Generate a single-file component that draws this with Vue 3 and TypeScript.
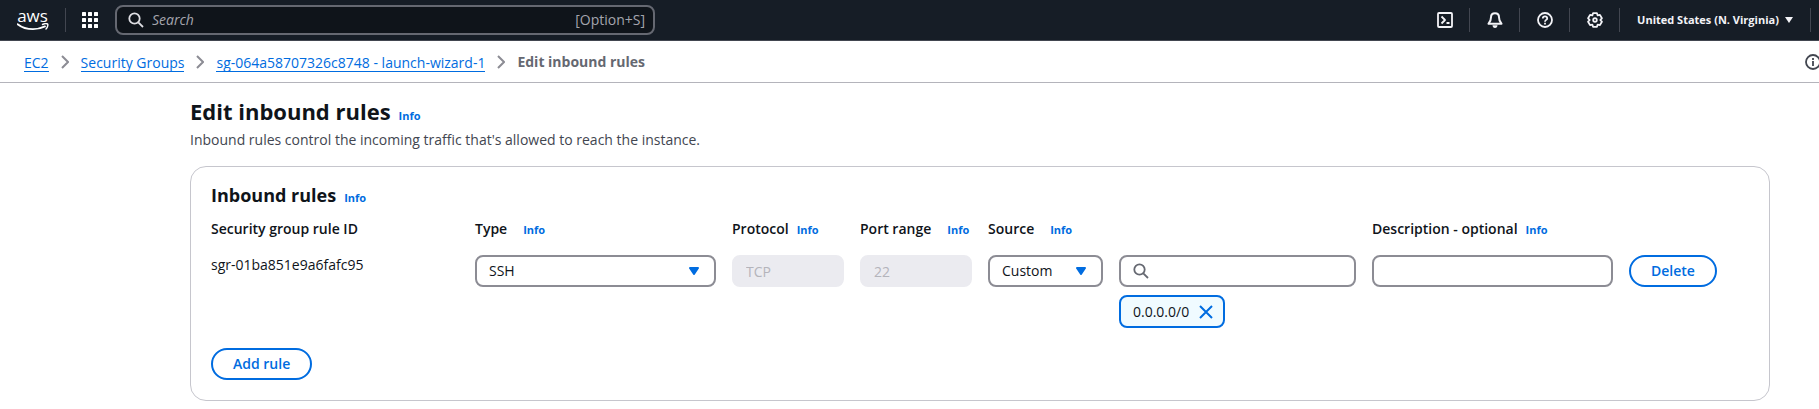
<script setup lang="ts">
import { ref } from 'vue'

const crumbs = ['EC2', 'Security Groups', 'sg-064a58707326c8748 - launch-wizard-1']
const ruleType = ref('SSH')
const source = ref('Custom')
const sourceFilter = ref('')
const description = ref('')
const cidrs = ref(['0.0.0.0/0'])
</script>

<template>
  <div class="page">
    <header class="topbar">
      <a class="logo" href="#" aria-label="AWS home">
        <span class="logo-word">aws</span>
        <svg class="smile" viewBox="0 0 32 8" width="32" height="8" aria-hidden="true">
          <path d="M0.6 1.2C5 4.6 10.500 6.200 16 6.200c4 0 8.300-1 12-2.800" fill="none" stroke="#fff" stroke-width="1.800" stroke-linecap="round" />
          <path d="M25.500 1.500c2-.9 4.500-1 5.200-.4.5.7-.2 3.500-1.700 5" fill="none" stroke="#fff" stroke-width="1.400" stroke-linecap="round" stroke-linejoin="round" />
        </svg>
      </a>
      <button class="apps" type="button" aria-label="Services">
        <svg viewBox="0 0 16 16" width="16" height="16" fill="#fff">
          <template v-for="r in 3" :key="r">
            <rect v-for="c in 3" :key="c" :x="(c - 1) * 6" :y="(r - 1) * 6" width="4" height="4" rx="0.5" />
          </template>
        </svg>
      </button>
      <div class="search">
        <svg viewBox="0 0 16 16" width="16" height="16" fill="none" stroke="#dedee3" stroke-width="1.8">
          <circle cx="6.500" cy="6.500" r="5.200" /><path d="M10.300 10.300 15 15" />
        </svg>
        <input type="text" placeholder="Search" aria-label="Search" />
        <span class="hint">[Option+S]</span>
      </div>
      <nav class="tools">
        <button class="tool" type="button" aria-label="CloudShell">
          <svg viewBox="0 0 16 16" width="16" height="16" fill="none" stroke="#f3f3f7" stroke-width="1.8" stroke-linejoin="round">
            <rect x="1" y="1" width="14" height="14" rx="1" /><path d="M4.500 4.500 8 8l-3.500 3.500M9.500 11h3" />
          </svg>
        </button>
        <button class="tool" type="button" aria-label="Notifications">
          <svg viewBox="0 0 16 16" width="16" height="16" fill="none" stroke="#f3f3f7" stroke-width="2" stroke-linejoin="round">
            <path d="M8 1.200C5.500 1.200 4 3 4 5.300c0 3-.6 4.500-2.500 6.500h13C12.600 9.800 12 8.300 12 5.300 12 3 10.500 1.200 8 1.200Z" /><path d="M5.500 13.200h5C10.500 14.800 9.500 16 8 16s-2.500-1.200-2.500-2.800Z" fill="#f3f3f7" stroke="none" />
          </svg>
        </button>
        <button class="tool" type="button" aria-label="Support">
          <svg viewBox="0 0 16 16" width="16" height="16" fill="none" stroke="#f3f3f7" stroke-width="1.800">
            <circle cx="8" cy="8" r="7" /><path d="M5.800 6.600C5.800 5.200 6.700 4.400 8 4.400s2.200.8 2.200 2C10.200 7.900 8 7.900 8 9.700M8 10.700v1.800" />
          </svg>
        </button>
        <button class="tool" type="button" aria-label="Settings">
          <svg viewBox="0 0 16 16" width="16" height="16" fill="none" stroke="#f3f3f7" stroke-width="1.800" stroke-linejoin="round">
            <path d="M6.040 1.170H9.960L10.650 3.410 12.930 2.890 14.890 6.280 13.300 8 14.890 9.720 12.930 13.110 10.650 12.590 9.960 14.830H6.040L5.350 12.590 3.070 13.110 1.110 9.720 2.700 8 1.110 6.280 3.070 2.890 5.350 3.410Z" /><circle cx="8" cy="8" r="1.800" />
          </svg>
        </button>
        <button class="region" type="button">
          United States (N. Virginia)
          <svg viewBox="0 0 8 6" width="8" height="6" fill="#f3f3f7"><path d="M0 0h8L4 6Z" /></svg>
        </button>
      </nav>
    </header>

    <div class="crumbbar">
      <nav class="crumbs" aria-label="Breadcrumbs">
        <template v-for="crumb in crumbs" :key="crumb">
          <a href="#">{{ crumb }}</a>
          <svg viewBox="0 0 8 14" width="8" height="14" fill="none" stroke="#8c8c94" stroke-width="2"><path d="M1 1l6 6-6 6" /></svg>
        </template>
        <span class="current">Edit inbound rules</span>
      </nav>
      <button class="panel-toggle" type="button" aria-label="Open info panel">
        <svg viewBox="0 0 16 16" width="16" height="16" fill="none" stroke="#424650" stroke-width="1.800">
          <circle cx="8" cy="8" r="7" /><path d="M8 7v5M8 4v2" />
        </svg>
      </button>
    </div>

    <main>
      <div class="title">
        <h1>Edit inbound rules</h1>
        <a class="info" href="#">Info</a>
      </div>
      <p class="lead">Inbound rules control the incoming traffic that's allowed to reach the instance.</p>

      <section class="card">
        <div class="title">
          <h2>Inbound rules</h2>
          <a class="info" href="#">Info</a>
        </div>
        <div class="rules">
          <div class="head">Security group rule ID</div>
          <div class="head wide"><label for="type">Type</label><a class="info" href="#">Info</a></div>
          <div class="head"><label for="protocol">Protocol</label><a class="info" href="#">Info</a></div>
          <div class="head wide"><label for="port">Port range</label><a class="info" href="#">Info</a></div>
          <div class="head wide"><label for="source">Source</label><a class="info" href="#">Info</a></div>
          <div class="head"><label for="description">Description - optional</label><a class="info" href="#">Info</a></div>
          <div class="head"></div>

          <div class="rule-id">sgr-01ba851e9a6fafc95</div>
          <div class="select">
            <select id="type" v-model="ruleType"><option>SSH</option></select>
            <svg viewBox="0 0 10 8" width="10" height="8"><path d="M1 1h8L5 7Z" /></svg>
          </div>
          <input id="protocol" class="field" type="text" value="TCP" disabled />
          <input id="port" class="field" type="text" value="22" disabled />
          <div class="source">
            <div class="select">
              <select id="source" v-model="source"><option>Custom</option></select>
              <svg viewBox="0 0 10 8" width="10" height="8"><path d="M1 1h8L5 7Z" /></svg>
            </div>
            <div class="source-values">
              <div class="filter field">
                <svg viewBox="0 0 16 16" width="16" height="16" fill="none" stroke="#656871" stroke-width="1.800">
                  <circle cx="6.500" cy="6.500" r="5.200" /><path d="M10.300 10.300 15 15" />
                </svg>
                <input v-model="sourceFilter" type="text" aria-label="Source filter" />
              </div>
              <div v-for="cidr in cidrs" :key="cidr" class="token">
                <span>{{ cidr }}</span>
                <button type="button" :aria-label="`Remove ${cidr}`">
                  <svg viewBox="0 0 14 14" width="14" height="14" fill="none" stroke="#006ce0" stroke-width="2"><path d="M1 1l12 12M13 1 1 13" /></svg>
                </button>
              </div>
            </div>
          </div>
          <input id="description" v-model="description" class="field" type="text" />
          <div><button class="pill" type="button">Delete</button></div>
        </div>
        <button class="pill" type="button">Add rule</button>
      </section>
    </main>
  </div>
</template>

<style>
body {
  margin: 0;
  background: #fff;
}
</style>

<style scoped>
.page,
.page * {
  box-sizing: border-box;
}
.page {
  font-family: "Open Sans", "Noto Sans", sans-serif;
  font-size: 14px;
  line-height: 20px;
  color: #0f141a;
}
button,
input,
select {
  font: inherit;
  color: inherit;
  margin: 0;
}
button {
  cursor: pointer;
}
svg {
  display: block;
  flex: none;
}
.topbar {
  display: flex;
  align-items: center;
  height: 41px;
  background: #161d26;
  border-bottom: 1px solid #424650;
  color: #f3f3f7;
}
.logo {
  display: flex;
  flex-direction: column;
  align-items: center;
  width: 66px;
  height: 24px;
  border-right: 1px solid #424650;
  color: #fff;
  text-decoration: none;
}
.logo-word {
  font-size: 17px;
  line-height: 15px;
  font-weight: 500;
}
.apps {
  display: flex;
  padding: 0 17px 0 16px;
  background: none;
  border: 0;
}
.search {
  display: flex;
  align-items: center;
  gap: 8px;
  width: 540px;
  height: 30px;
  padding: 0 8px 0 11px;
  background: #0f141a;
  border: 2px solid #656871;
  border-radius: 8px;
}
.search input {
  flex: 1;
  min-width: 0;
  padding: 0;
  background: none;
  border: 0;
  outline: 0;
}
.search input::placeholder {
  color: #a4a4ad;
  font-style: italic;
  opacity: 1;
}
.hint {
  color: #a4a4ad;
}
.tools {
  display: flex;
  align-items: center;
  margin-left: auto;
  padding-right: 8px;
}
.tool,
.region {
  display: flex;
  align-items: center;
  justify-content: center;
  height: 24px;
  padding: 0;
  background: none;
  border: 0;
  border-right: 1px solid #424650;
}
.tool {
  width: 50px;
}
.region {
  gap: 6px;
  width: 191px;
  font-size: 11px;
  font-weight: 700;
}
.crumbbar {
  display: flex;
  align-items: center;
  justify-content: space-between;
  height: 42px;
  padding-left: 24px;
  overflow: hidden;
  border-bottom: 1px solid #b4b4bb;
}
.crumbs {
  display: flex;
  align-items: center;
  gap: 12px;
}
.crumbs a {
  padding-top: 2px;
  color: #006ce0;
  line-height: 17px;
  text-decoration: none;
  border-bottom: 1px solid #006ce0;
}
.current {
  font-weight: 700;
  color: #656871;
}
.panel-toggle {
  margin-right: -2px;
  padding: 0;
  background: none;
  border: 0;
}
main {
  padding: 13px 49px 8px 190px;
}
h1,
h2,
.lead {
  margin: 0;
}
.title {
  display: flex;
  align-items: baseline;
  gap: 8px;
}
h1 {
  font-size: 22px;
  line-height: 30px;
  font-weight: 700;
}
h2 {
  font-size: 18px;
  line-height: 24px;
  font-weight: 700;
}
.info {
  font-size: 11px;
  line-height: 12px;
  font-weight: 700;
  color: #006ce0;
  text-decoration: none;
}
.lead {
  padding: 4px 0 16px;
  color: #424650;
}
.card {
  padding: 16px 20px 20px;
  border: 1px solid #c6c6cd;
  border-radius: 16px;
}
.rules {
  display: grid;
  grid-template-columns: 248fr 241fr 112fr 112fr 368fr 241fr 120fr;
  column-gap: 16px;
  align-items: start;
  padding: 12px 0 20px;
}
.head {
  display: flex;
  align-items: baseline;
  gap: 8px;
  padding-bottom: 16px;
  font-weight: 600;
  white-space: nowrap;
}
.wide {
  gap: 16px;
}
.field,
select {
  width: 100%;
  height: 32px;
  padding: 0 12px;
  background: #fff;
  border: 2px solid #8c8c94;
  border-radius: 8px;
}
.field:disabled {
  background: #ebebf0;
  border-color: #ebebf0;
  color: #b4b4bb;
}
.select {
  position: relative;
}
select {
  appearance: none;
}
.select svg {
  position: absolute;
  top: 12px;
  right: 17px;
  fill: #006ce0;
  stroke: #006ce0;
  stroke-width: 2px;
  stroke-linejoin: round;
  pointer-events: none;
}
.source {
  display: grid;
  grid-template-columns: 115fr 237fr;
  gap: 16px;
  align-items: start;
}
.source-values {
  min-width: 0;
}
.filter {
  display: flex;
  align-items: center;
}
.filter input {
  flex: 1;
  min-width: 0;
  border: 0;
  outline: 0;
}
.token {
  display: flex;
  align-items: center;
  gap: 10px;
  width: max-content;
  height: 33px;
  margin-top: 8px;
  padding: 0 10px 0 12px;
  background: #f0fbff;
  border: 2px solid #006ce0;
  border-radius: 8px;
}
.token button {
  padding: 0;
  background: none;
  border: 0;
}
.pill {
  height: 32px;
  padding: 0 20px;
  background: #fff;
  border: 2px solid #006ce0;
  border-radius: 20px;
  color: #006ce0;
  font-weight: 600;
}
</style>
